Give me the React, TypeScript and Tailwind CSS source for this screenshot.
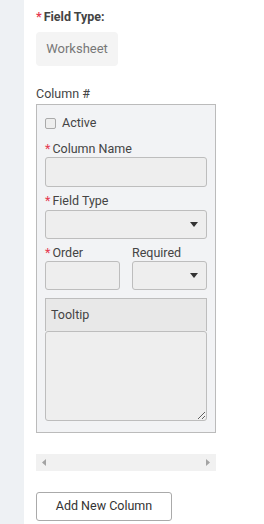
const Star = () => <span className="text-[#e53950] mr-[2px]">*</span>;

const Caret = () => (
  <svg width="8" height="5" viewBox="0 0 8 5" aria-hidden="true">
    <path d="M0 0h8L4 5z" fill="#333" />
  </svg>
);

const Select = ({ className = '' }: { className?: string }) => (
  <div
    className={`h-[29px] bg-[#eeeeee] border border-[#bdbdbd] rounded-[3px] flex items-center justify-end pr-[8px] ${className}`}
  >
    <Caret />
  </div>
);

export default function App() {
  return (
    <div
      className="flex min-h-[524px] w-[264px] text-[#333]"
      style={{ fontFamily: 'Roboto, "Liberation Sans", sans-serif' }}
    >
      <div className="w-[24px] bg-[#eef1f4] shrink-0" />
      <div className="flex-1 bg-white pl-[12px] pt-[9px]">
        <div className="text-[12.5px] font-bold text-[#444] leading-[16px]">
          <Star />
          Field Type:
        </div>
        <div className="mt-[7px] w-[82px] h-[34px] bg-[#f4f4f4] rounded-[4px] flex items-center justify-center text-[13px] text-[#777]">
          Worksheet
        </div>

        <div className="mt-[20px] text-[12.5px] text-[#444] leading-[16px]">Column #</div>
        <div className="mt-[2px] w-[180px] h-[329px] border border-[#bbbbbb] bg-[#f2f3f5] px-[8px] pt-[10px]">
          <div className="flex items-center gap-[6px] text-[12.5px] text-[#444] leading-[16px]">
            <div className="w-[11px] h-[11px] border border-[#aaa] rounded-[2px] bg-[#eee]" />
            Active
          </div>

          <div className="mt-[10px] text-[12.5px] text-[#444] leading-[16px]">
            <Star />
            Column Name
          </div>
          <div className="h-[30px] bg-[#eeeeee] border border-[#bdbdbd] rounded-[3px]" />

          <div className="mt-[6px] text-[12.5px] text-[#444] leading-[16px]">
            <Star />
            Field Type
          </div>
          <Select className="mt-[1px]" />

          <div className="mt-[6px] flex gap-[12px]">
            <div className="w-[75px]">
              <div className="text-[12.5px] text-[#444] leading-[16px]">
                <Star />
                Order
              </div>
              <div className="h-[29px] bg-[#eeeeee] border border-[#bdbdbd] rounded-[3px]" />
            </div>
            <div className="flex-1">
              <div className="text-[12.5px] text-[#444] leading-[16px]">Required</div>
              <Select />
            </div>
          </div>

          <div className="mt-[8px] h-[33px] bg-[#e8e8e8] border border-[#bdbdbd] border-b-0 flex items-center pl-[5px] text-[12.5px] text-[#444]">
            Tooltip
          </div>
          <textarea className="block w-full h-[90px] bg-[#eeeeee] border border-[#bdbdbd] rounded-[3px] outline-none" />
        </div>

        <div className="mt-[21px] w-[180px] h-[17px] bg-[#f1f1f1] flex items-center justify-between px-[6px]">
          <svg width="4" height="7" viewBox="0 0 4 7" aria-hidden="true">
            <path d="M4 0v7L0 3.5z" fill="#a3a3a3" />
          </svg>
          <svg width="4" height="7" viewBox="0 0 4 7" aria-hidden="true">
            <path d="M0 0v7l4-3.5z" fill="#a3a3a3" />
          </svg>
        </div>

        <button className="mt-[21px] w-[136px] h-[29px] bg-white border border-[#aaaaaa] rounded-[3px] text-[12.5px] text-[#333]">
          Add New Column
        </button>
      </div>
    </div>
  );
}
